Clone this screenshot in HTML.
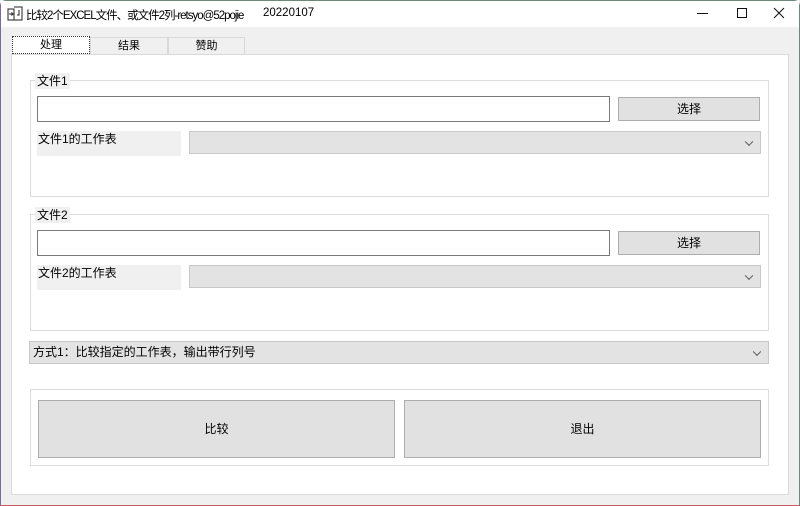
<!DOCTYPE html>
<html><head><meta charset="utf-8"><style>
*{margin:0;padding:0;box-sizing:border-box}
body{width:800px;height:506px;background:#f0f0f0;position:relative;overflow:hidden;font-family:"Liberation Sans","Noto Sans CJK SC",sans-serif;font-size:12px;color:#000}
.a{position:absolute}
.win{left:0;top:0;width:800px;height:506px;border:1px solid #6a8a7a;border-left-color:#7a6a9a;border-bottom-color:#c85a5a;border-radius:6px 6px 0 0}
.title{left:1px;top:1px;width:798px;height:26px;background:#fff}
.panel{left:11px;top:54px;width:778px;height:441px;background:#fff;border:1px solid #dcdcdc}
.tab{top:37px;height:18px;background:#f0f0f0;border:1px solid #d9d9d9;text-align:center;line-height:16px;font-size:11px}
.grp{border:1px solid #dcdcdc}
.lg{background:#f0f0f0;padding:0 2px;line-height:16px}
.tb{background:#fff;border:1px solid #7a7a7a}
.btn{background:#e1e1e1;border:1px solid #adadad;text-align:center}
.cb{background:#e3e3e3;border:1px solid #c8c8c8}
.arr{position:absolute;right:8px;top:50%;width:6px;height:6px;border-right:1px solid #555;border-bottom:1px solid #555;transform:translateY(-70%) rotate(45deg)}
</style></head><body>
<div class="a win"></div>
<div class="a title"></div>
<svg class="a" style="left:7px;top:6px" width="16" height="16" viewBox="0 0 16 16"><path d="M1 3h6v11H1zM7 1h8v13H7" fill="none" stroke="#222" stroke-width="1"/><path d="M2 8h4M4.5 6.5L6 8l-1.5 1.5M12 4v5h-2" fill="none" stroke="#222"/></svg>
<div class="a" style="left:26px;top:7px;font-size:11.5px;letter-spacing:-1px;white-space:nowrap">比较2个EXCEL文件、或文件2列-retsyo@52pojie</div>
<div class="a" style="left:263px;top:7px;font-size:11.5px">20220107</div>
<div class="a" style="left:697px;top:13px;width:11px;height:1px;background:#111"></div>
<div class="a" style="left:737px;top:8px;width:10px;height:10px;border:1px solid #111"></div>
<svg class="a" style="left:773px;top:7px" width="12" height="12"><path d="M1 1L11 11M11 1L1 11" stroke="#111" stroke-width="1"/></svg>
<div class="a panel"></div>
<div class="a tab" style="left:90px;width:78px">结果</div>
<div class="a tab" style="left:168px;width:77px">赞助</div>
<div class="a tab" style="left:12px;width:78px;background:#fff;border:1px dotted #333;top:36px">处理</div>

<div class="a grp" style="left:30px;top:80px;width:739px;height:117px"></div>
<div class="a lg" style="left:35px;top:73px">文件1</div>
<div class="a tb" style="left:37px;top:96px;width:573px;height:26px"></div>
<div class="a btn" style="left:618px;top:97px;width:142px;height:24px;line-height:22px">选择</div>
<div class="a lg" style="left:37px;top:131px;width:144px;height:25px;padding-left:1px;line-height:16px">文件1的工作表</div>
<div class="a cb" style="left:189px;top:131px;width:572px;height:23px"><div class="arr"></div></div>

<div class="a grp" style="left:30px;top:214px;width:739px;height:117px"></div>
<div class="a lg" style="left:35px;top:207px">文件2</div>
<div class="a tb" style="left:37px;top:230px;width:573px;height:26px"></div>
<div class="a btn" style="left:618px;top:231px;width:142px;height:24px;line-height:22px">选择</div>
<div class="a lg" style="left:37px;top:265px;width:144px;height:25px;padding-left:1px;line-height:16px">文件2的工作表</div>
<div class="a cb" style="left:189px;top:265px;width:572px;height:23px"><div class="arr"></div></div>

<div class="a cb" style="left:29px;top:341px;width:740px;height:23px;line-height:21px;padding-left:3px">方式1：比较指定的工作表，输出带行列号<div class="arr"></div></div>

<div class="a grp" style="left:30px;top:389px;width:739px;height:77px"></div>
<div class="a btn" style="left:38px;top:400px;width:357px;height:58px;line-height:56px">比较</div>
<div class="a btn" style="left:404px;top:400px;width:357px;height:58px;line-height:56px">退出</div>
</body></html>
